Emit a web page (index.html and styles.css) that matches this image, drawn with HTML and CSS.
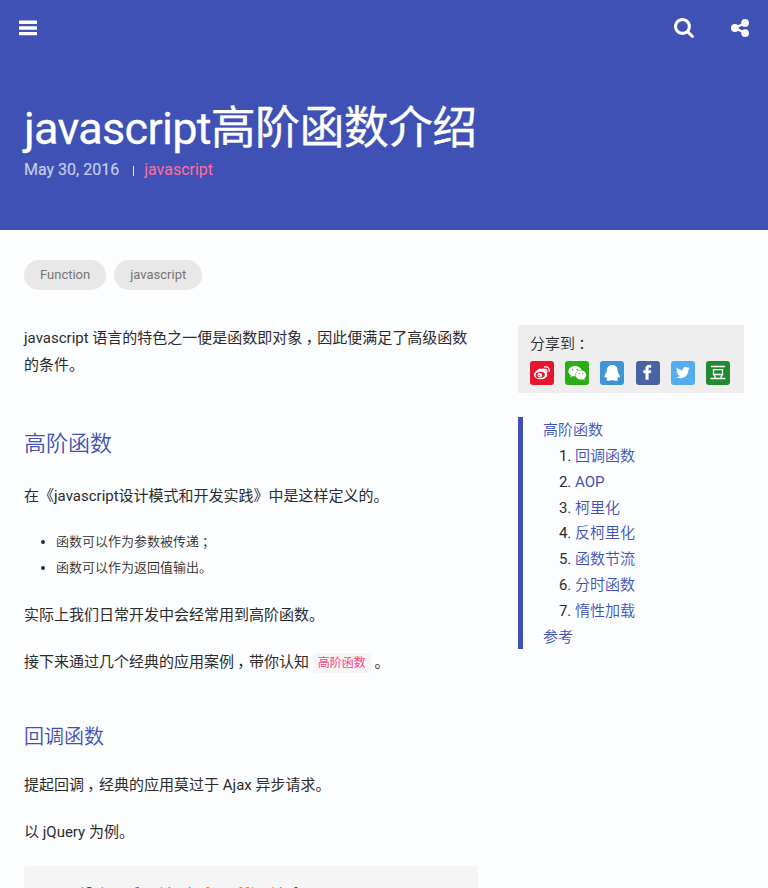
FILE: index.html
```html
<!DOCTYPE html>
<html lang="zh-CN">
<head>
<meta charset="utf-8">
<title>javascript高阶函数介绍</title>
<link rel="stylesheet" href="styles.css">
</head>
<body>
<header class="hero">
  <nav class="bar">
    <svg class="icon" viewBox="0 0 18 16"><path fill="#fff" d="M.5.4h17q.5 0 .5.500v2.500q0 .5-.5.500H.5q-.5 0-.5-.5V.9q0-.5.5-.5zM.5 6.200h17q.5 0 .5.500v2.500q0 .5-.5.500H.5q-.5 0-.5-.5V6.700q0-.5.5-.5zM.5 12h17q.5 0 .5.500v2.300q0 .5-.5.500H.5q-.5 0-.5-.5v-2.300q0-.5.5-.5z"/></svg>
    <span class="space"></span>
    <svg class="icon search" viewBox="64 128 1664 1664"><path fill="#fff" d="M1216 832q0-185-131.5-316.5t-316.5-131.5-316.5 131.5-131.5 316.5 131.5 316.5 316.5 131.5 316.5-131.5 131.5-316.5zm512 832q0 52-38 90t-90 38q-54 0-90-38l-343-342q-179 124-399 124-143 0-273.5-55.5t-225-150-150-225-55.5-273.5 55.5-273.5 150-225 225-150 273.5-55.5 273.5 55.5 225 150 150 225 55.5 273.5q0 220-124 399l343 343q37 37 37 90z"/></svg>
    <svg class="icon share" viewBox="0 0 18 18"><path d="M14 4 4 9l10 5" fill="none" stroke="#fff" stroke-width="2.300"/><g fill="#fff"><circle cx="14.100" cy="3.900" r="3.900"/><circle cx="3.900" cy="9" r="3.900"/><circle cx="14.100" cy="14.100" r="3.900"/></g></svg>
  </nav>
  <h1>javascript高阶函数介绍</h1>
  <div class="meta"><time>May 30, 2016</time><i></i><a>javascript</a></div>
</header>
<div class="tags"><a>Function</a><a>javascript</a></div>
<div class="columns">
  <main>
    <p>javascript 语言的特色之一便是函数即对象<span class="mid">，</span>因此便满足了高级函数的条件。</p>
    <h2>高阶函数</h2>
    <p>在《javascript设计模式和开发实践》中是这样定义的。</p>
    <ul>
      <li>函数可以作为参数被传递<span class="mid">；</span></li>
      <li>函数可以作为返回值输出。</li>
    </ul>
    <p>实际上我们日常开发中会经常用到高阶函数。</p>
    <p>接下来通过几个经典的应用案例<span class="mid">，</span>带你认知 <code>高阶函数</code> 。</p>
    <h3>回调函数</h3>
    <p>提起回调<span class="mid">，</span>经典的应用莫过于 Ajax 异步请求。</p>
    <p>以 jQuery 为例。</p>
    <pre><b>var</b> getData = <b>function</b><u>(</u><em>url, callback</em><u>)</u> {</pre>
  </main>
  <aside>
    <section class="sharebox">
      <div>分享到<span class="mid">：</span></div>
      <div class="buttons">
        <svg class="weibo" viewBox="0 0 24 24"><ellipse cx="10.600" cy="13.800" rx="6.700" ry="4.500" fill="#fff"/><path d="M5 11.800q4.500-5.500 6.300-3.800 4.200-1.400 4 1.200 2.500.9 1.700 4" fill="#fff"/><ellipse cx="10.200" cy="14" rx="4.700" ry="3.100" fill="#e6162d" transform="rotate(-8 10 14)"/><circle cx="9.800" cy="14.200" r="2.300" fill="#fff"/><circle cx="9.200" cy="14.800" r=".8" fill="#e6162d"/><path d="M14.600 5.900q5-.8 4.600 4.400M15 8.300q2-.2 1.900 1.800" fill="none" stroke="#fff" stroke-width="1.300" stroke-linecap="round"/></svg>
        <svg class="wechat" viewBox="0 0 24 24"><path fill="#fff" d="M10 4.900c-3.700 0-6.600 2.300-6.600 5.300 0 1.700 1 3.200 2.600 4.200l-.6 2 2.400-1.300q1.300.4 2.600.4a5 5 0 0 1-.2-1.400c0-2.800 2.700-5 6-5h.4C16 6.700 13.300 4.900 10 4.900z"/><path fill="#fff" d="M21.300 14c0-2.500-2.500-4.500-5.300-4.500-3 0-5.400 2-5.400 4.500s2.400 4.500 5.400 4.500q1 0 1.900-.3l1.800 1-.5-1.700c1.300-.9 2.100-2.100 2.100-3.500z"/><g fill="#2bad13"><circle cx="7.700" cy="8.500" r=".8"/><circle cx="12.200" cy="8.500" r=".8"/><circle cx="14.200" cy="12.700" r=".6"/><circle cx="17.700" cy="12.700" r=".6"/></g></svg>
        <svg class="qq" viewBox="0 0 24 24"><path fill="#fff" d="M12.300 4c-3.600 0-5.400 2.300-5.400 5.400 0 .8-.5 1.200-.5 2.200-1.200 1.300-2 3-1.800 4.700.2.900 1 .3 1.500-.5q.3 1.100 1.200 1.900c-1.200.6-1.200 1.900.9 2 1.600.1 3.100-.2 4.100-.8 1 .6 2.500.9 4 .8 2-.1 2-1.400.8-2q.9-.8 1.200-1.900c.6.8 1.300 1.400 1.500.5.200-1.700-.7-3.400-1.900-4.700 0-1-.3-1.400-.3-2.200C17.600 6.300 15.900 4 12.300 4z"/></svg>
        <svg class="facebook" viewBox="0 0 24 24"><path transform="translate(3.300 4.100) scale(.0087)" fill="#fff" stroke="#fff" stroke-width="50" d="M1343 12v264h-157q-86 0-116 36t-30 108v189h293l-39 296h-254v759h-306v-759h-255v-296h255v-218q0-186 104-288.500t277-102.500q147 0 228 12z"/></svg>
        <svg class="twitter" viewBox="0 0 24 24"><path transform="translate(4 3.700) scale(.0088)" fill="#fff" d="M1684 408q-67 98-162 167 1 14 1 42 0 130-38 259.500t-115.500 248.500-184.500 210.500-258 146-323 54.500q-271 0-496-145 35 4 78 4 225 0 401-138-105-2-188-64.500t-114-159.500q33 5 61 5 43 0 85-11-112-23-185.500-111.500t-73.500-205.500v-4q68 38 146 41-66-44-105-115t-39-154q0-88 44-163 121 149 294.500 238.500t371.500 99.500q-8-38-8-74 0-134 94.500-228.500t228.500-94.500q140 0 236 102 109-21 205-78-37 115-142 178 93-10 186-50z"/></svg>
        <svg class="douban" viewBox="0 0 24 24"><path d="M5 5.500h14M7.500 8.700h9v4.800h-9zM8.200 14l1.300 3.300M16 14l-1.500 3.300M4.500 17.500h15" fill="none" stroke="#fff" stroke-width="1.300"/></svg>
      </div>
    </section>
    <nav class="toc">
      <a>高阶函数</a>
      <ol><li><a>回调函数</a></li><li><a class="latin">AOP</a></li><li><a>柯里化</a></li><li><a>反柯里化</a></li><li><a>函数节流</a></li><li><a>分时函数</a></li><li><a>惰性加载</a></li></ol>
      <a>参考</a>
    </nav>
  </aside>
</div>
</body>
</html>
```
FILE: styles.css
```css
* { box-sizing: border-box; }
html { overflow: hidden; }
body { margin: 0; height: 888px; overflow: hidden; background: #fcfdff; color: #2b2b2b; font: 15px/27px Roboto, "Noto Sans CJK SC", sans-serif; font-weight: 400; }
.hero { height: 230px; background: #3f51b5; color: #fff; }
.bar { height: 56px; display: flex; align-items: center; padding: 0 19px; }
.space { flex: 1; }
.icon { width: 18px; height: 16px; }
.search { width: 20px; height: 20px; margin-right: 37px; }
.share { height: 18px; }
h1 { margin: 49px 24px 0; font-size: 45px; line-height: 48px; font-weight: 400; letter-spacing: -.7px; -webkit-text-stroke: .3px #fff; }
.meta { display: flex; align-items: center; margin: 3px 24px 0; font-size: 16px; line-height: 28px; color: #ff6e9c; }
.meta time { color: #c5cbe9; -webkit-text-stroke: .2px #c5cbe9; }
.meta i { width: 1px; height: 10px; background: #e8eaf6; margin: 2px 10px 0 14px; }
.tags { display: flex; gap: 8px; padding: 30px 24px 0; }
.tags a { height: 30px; padding: 0 16px; border-radius: 15px; background: #e8e8e8; color: #757575; font-size: 13px; line-height: 30px; }
.columns { display: grid; grid-template-columns: 454px 226px; gap: 40px; padding: 35px 24px 0; }
main p { margin: 0 0 20px; }
.mid { padding-left: .22em; margin-right: -.22em; }
h2, h3 { color: #3f51b5; font-weight: 350; }
h2 { font-size: 22px; line-height: 30px; margin: 50px 0 24px; }
h3 { font-size: 20px; line-height: 28px; margin: 47px 0 21px; }
ul { margin: -1px 0 21px; padding-left: 32px; font-size: 13px; line-height: 26px; font-weight: 350; }
code { display: inline-block; height: 20px; padding: 0 5px; border-radius: 2px; background: #f5f5f5; color: #ff4081; font: 12px/20px Roboto, "Noto Sans CJK SC", sans-serif; }
pre { margin: 0; height: 22px; overflow: hidden; padding: 18px 16px 0; border-radius: 2px 2px 0 0; background: #f5f5f5; color: #4d4d4c; font: 12px/18px "Liberation Mono", monospace; letter-spacing: -.6px; }
pre b { color: #8959a8; font-weight: 400; }
pre u { color: #4271ae; text-decoration: none; }
pre em { color: #f5871f; font-style: normal; }
.sharebox { height: 68px; padding: 6px 12px 0; background: #eee; font-weight: 350; }
.buttons { display: flex; gap: 11.200px; margin-top: 3px; }
.buttons svg { flex: none; width: 24px; height: 24px; border-radius: 3px; }
.weibo { background: #e6162d; }
.wechat { background: #2bad13; }
.qq { background: #3f94d5; }
.facebook { background: #4862a3; }
.twitter { background: #55acee; }
.douban { background: #228a31; }
.toc { margin-top: 24px; height: 232px; padding: 1px 0 0 20px; border-left: 5px solid #3f51b5; line-height: 25.850px; }
.toc a { color: #3f51b5; font-weight: 350; }
.toc .latin { font-weight: 400; }
.toc ol { margin: 0; padding-left: 32px; }
```
